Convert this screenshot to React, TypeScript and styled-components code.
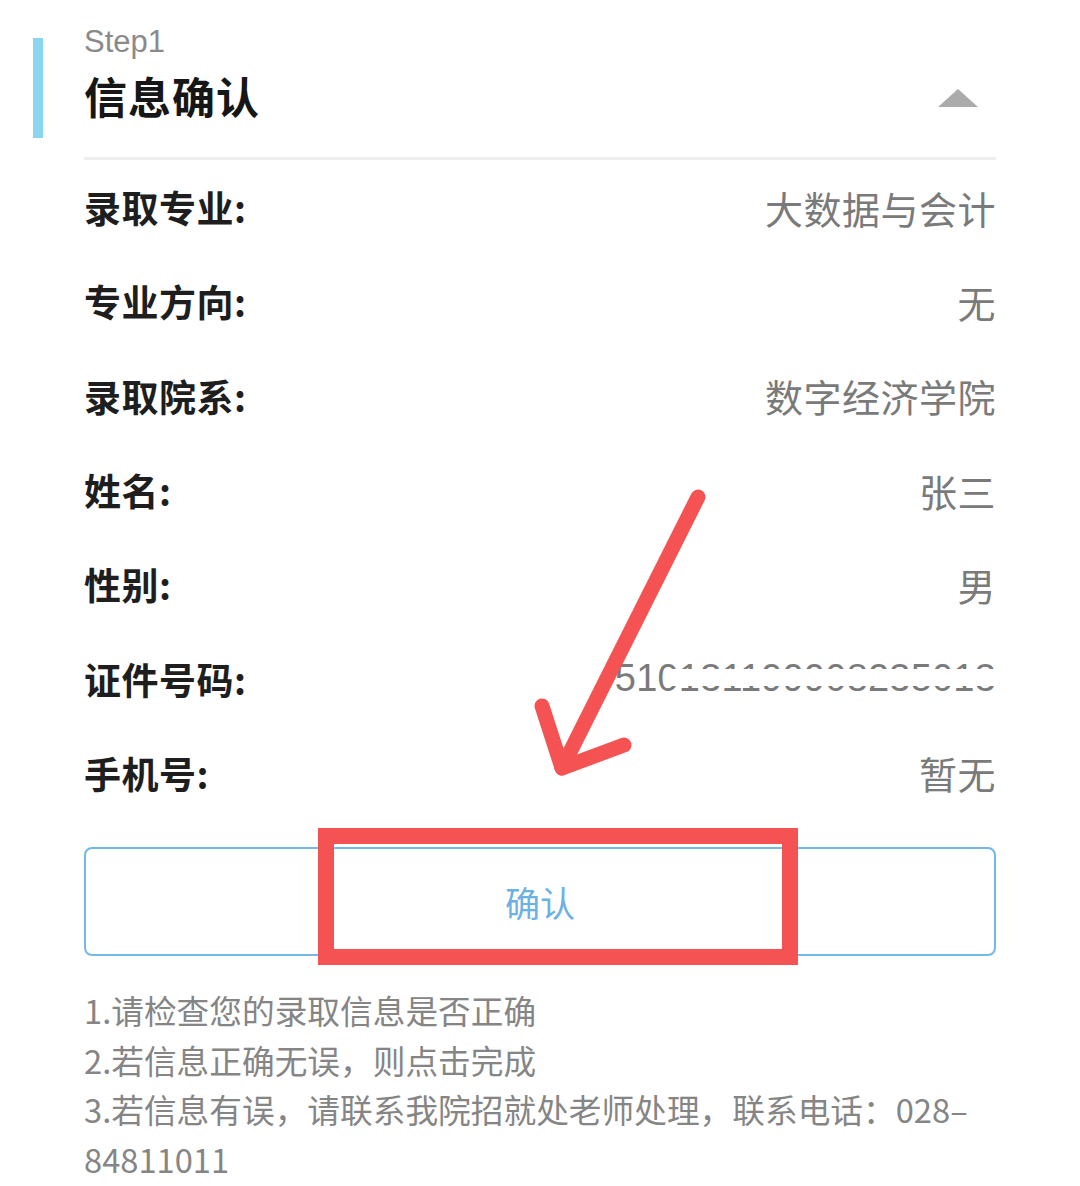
import React from 'react';
import styled, { createGlobalStyle } from 'styled-components';

const GlobalStyle = createGlobalStyle`
	html, body {
		margin: 0;
		padding: 0;
		background: #ffffff;
	}
	body {
		font-family: 'Noto Sans CJK SC', 'Noto Sans', sans-serif;
	}
`;

const Page = styled.div`
	position: relative;
	width: 1080px;
	height: 1186px;
	overflow: hidden;
	box-sizing: border-box;
	padding: 24px 84px 0 84px;
`;

const Header = styled.div`
	display: flex;
	align-items: center;
	margin-left: -51px;
	gap: 41px;
	height: 130px;
	box-sizing: border-box;
	padding-bottom: 4px;
`;

const AccentBar = styled.div`
	width: 10px;
	height: 100px;
	background: #8ad6f1;
	align-self: flex-start;
	margin-top: 14px;
`;

const TitleBlock = styled.div`
	flex: 1;
	display: flex;
	flex-direction: column;
	align-self: flex-start;
`;

const StepLabel = styled.span`
	font-family: 'Liberation Sans', 'Noto Sans', sans-serif;
	font-size: 31px;
	line-height: 36px;
	color: #8a8a8a;
`;

const Title = styled.h1`
	margin: 10px 0 0 0;
	font-size: 43px;
	line-height: 50px;
	font-weight: 700;
	color: #161616;
	letter-spacing: 1px;
`;

const Caret = styled.div`
	width: 0;
	height: 0;
	border-left: 20px solid transparent;
	border-right: 20px solid transparent;
	border-bottom: 18px solid #ababab;
	margin-right: 18px;
	margin-top: 22px;
`;

const Divider = styled.div`
	height: 3px;
	background: #eeeeee;
	margin-top: 3px;
`;

const InfoList = styled.div`
	display: flex;
	flex-direction: column;
`;

const Row = styled.div`
	display: flex;
	align-items: center;
	justify-content: space-between;
	height: 94.3px;
`;

const Label = styled.span`
	font-size: 37px;
	font-weight: 700;
	color: #1e1e1e;
	letter-spacing: 0.5px;
`;

const Value = styled.span`
	font-size: 38px;
	color: #7a7a7a;
	letter-spacing: 0.5px;
`;

const IdValue = styled.span`
	position: relative;
	font-family: 'Liberation Sans', 'Noto Sans', sans-serif;
	font-size: 38px;
	color: #7a7a7a;
	letter-spacing: 0.2px;
`;

/* the number is half wiped out in the screenshot */
const Smudge = styled.span`
	position: absolute;
	left: 56px;
	right: 0;
	top: 12px;
	height: 17px;
	background: #ffffff;
`;

const ConfirmButton = styled.button`
	display: flex;
	align-items: center;
	justify-content: center;
	width: 100%;
	height: 109px;
	margin-top: 27px;
	border: 2px solid #74b8e8;
	border-radius: 8px;
	background: #ffffff;
	font-family: 'Noto Sans CJK SC', sans-serif;
	font-size: 35px;
	color: #6cb1e4;
	cursor: pointer;
`;

const Notes = styled.div`
	margin-top: 29px;
	font-size: 32.7px;
	line-height: 49.5px;
	color: #858585;
	width: 920px;
`;

const NoteLine = styled.div``;

const Annotation = styled.svg`
	position: absolute;
	left: 0;
	top: 0;
	pointer-events: none;
`;

const rows: { label: string; value: string; id?: boolean }[] = [
	{ label: '录取专业:', value: '大数据与会计' },
	{ label: '专业方向:', value: '无' },
	{ label: '录取院系:', value: '数字经济学院' },
	{ label: '姓名:', value: '张三' },
	{ label: '性别:', value: '男' },
	{ label: '证件号码:', value: '510131199908235013', id: true },
	{ label: '手机号:', value: '暂无' },
];

const App: React.FC = () => {
	return (
		<>
			<GlobalStyle />
			<Page>
				<Header>
					<AccentBar />
					<TitleBlock>
						<StepLabel>Step1</StepLabel>
						<Title>信息确认</Title>
					</TitleBlock>
					<Caret />
				</Header>
				<Divider />
				<InfoList>
					{rows.map(({ label, value, id }) => (
						<Row key={label}>
							<Label>{label}</Label>
							{id ? (
								<IdValue>
									{value}
									<Smudge />
								</IdValue>
							) : (
								<Value>{value}</Value>
							)}
						</Row>
					))}
				</InfoList>
				<ConfirmButton>确认</ConfirmButton>
				<Notes>
					<NoteLine>1.请检查您的录取信息是否正确</NoteLine>
					<NoteLine>2.若信息正确无误，则点击完成</NoteLine>
					<NoteLine>3.若信息有误，请联系我院招就处老师处理，联系电话：028–84811011</NoteLine>
				</Notes>
				<Annotation width="1080" height="1186" viewBox="0 0 1080 1186">
					<rect x="326" y="836" width="464" height="121" fill="none" stroke="#f55353" strokeWidth="16" />
					<g stroke="#f55353" strokeWidth="15" strokeLinecap="round" strokeLinejoin="round" fill="none">
						<line x1="698" y1="497" x2="562" y2="768" />
						<polyline points="542,706 562,768 624,745" />
					</g>
				</Annotation>
			</Page>
		</>
	);
};

export default App;
